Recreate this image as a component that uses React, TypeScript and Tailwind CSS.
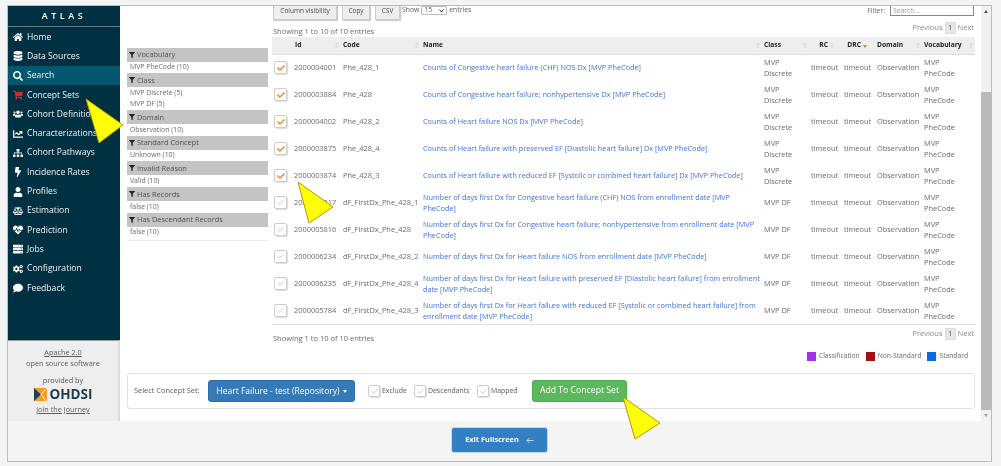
import {
  FaBalanceScale,
  FaBolt,
  FaChartLine,
  FaCheck,
  FaCogs,
  FaComment,
  FaDatabase,
  FaFilter,
  FaHeartbeat,
  FaHome,
  FaSearch,
  FaServer,
  FaShoppingCart,
  FaSitemap,
  FaUser,
  FaUsers,
} from "react-icons/fa";

const navItems = [
  { icon: FaHome, label: "Home" },
  { icon: FaDatabase, label: "Data Sources" },
  { icon: FaSearch, label: "Search", active: true },
  { icon: FaShoppingCart, label: "Concept Sets", red: true },
  { icon: FaUsers, label: "Cohort Definitions" },
  { icon: FaChartLine, label: "Characterizations" },
  { icon: FaSitemap, label: "Cohort Pathways" },
  { icon: FaBolt, label: "Incidence Rates" },
  { icon: FaUser, label: "Profiles" },
  { icon: FaBalanceScale, label: "Estimation" },
  { icon: FaHeartbeat, label: "Prediction" },
  { icon: FaServer, label: "Jobs" },
  { icon: FaCogs, label: "Configuration" },
  { icon: FaComment, label: "Feedback" },
];

const facets = [
  { title: "Vocabulary", values: ["MVP PheCode (10)"] },
  { title: "Class", values: ["MVP Discrete (5)", "MVP DF (5)"] },
  { title: "Domain", values: ["Observation (10)"] },
  { title: "Standard Concept", values: ["Unknown (10)"] },
  { title: "Invalid Reason", values: ["Valid (10)"] },
  { title: "Has Records", values: ["false (10)"] },
  { title: "Has Descendant Records", values: ["false (10)"] },
];

const rows = [
  { id: "2000004001", code: "Phe_428_1", name: "Counts of Congestive heart failure (CHF) NOS Dx [MVP PheCode]", cls: "MVP Discrete", on: true },
  { id: "2000003884", code: "Phe_428", name: "Counts of Congestive heart failure; nonhypertensive Dx [MVP PheCode]", cls: "MVP Discrete", on: true },
  { id: "2000004002", code: "Phe_428_2", name: "Counts of Heart failure NOS Dx [MVP PheCode]", cls: "MVP Discrete", on: true },
  { id: "2000003875", code: "Phe_428_4", name: "Counts of Heart failure with preserved EF [Diastolic heart failure] Dx [MVP PheCode]", cls: "MVP Discrete", on: true },
  { id: "2000003874", code: "Phe_428_3", name: "Counts of Heart failure with reduced EF [Systolic or combined heart failure] Dx [MVP PheCode]", cls: "MVP Discrete", on: true },
  { id: "2000005817", code: "dF_FirstDx_Phe_428_1", name: "Number of days first Dx for Congestive heart failure (CHF) NOS from enrollment date [MVP PheCode]", cls: "MVP DF", on: false },
  { id: "2000005816", code: "dF_FirstDx_Phe_428", name: "Number of days first Dx for Congestive heart failure; nonhypertensive from enrollment date [MVP PheCode]", cls: "MVP DF", on: false },
  { id: "2000006234", code: "dF_FirstDx_Phe_428_2", name: "Number of days first Dx for Heart failure NOS from enrollment date [MVP PheCode]", cls: "MVP DF", on: false },
  { id: "2000006235", code: "dF_FirstDx_Phe_428_4", name: "Number of days first Dx for Heart failure with preserved EF [Diastolic heart failure] from enrollment date [MVP PheCode]", cls: "MVP DF", on: false },
  { id: "2000005784", code: "dF_FirstDx_Phe_428_3", name: "Number of days first Dx for Heart failure with reduced EF [Systolic or combined heart failure] from enrollment date [MVP PheCode]", cls: "MVP DF", on: false },
];

const headers = [
  { label: "", w: "w-[21px]" },
  { label: "Id", w: "w-[48px]" },
  { label: "Code", w: "w-[80px]" },
  { label: "Name", w: "w-[341px]" },
  { label: "Class", w: "w-[47px]" },
  { label: "RC", w: "w-[33px]", right: true },
  { label: "DRC", w: "w-[33px]", right: true, sorted: true },
  { label: "Domain", w: "w-[47px]" },
  { label: "Vocabulary", w: "w-[53px]" },
];

function SortArrows({ tight }: { tight?: boolean }) {
  return (
    <span className={`flex flex-col gap-[1px] ${tight ? "ml-[2px]" : "ml-auto"}`}>
      <span className="w-0 h-0 border-x-[2.5px] border-x-transparent border-b-[3px] border-b-[#ddd]" />
      <span className="w-0 h-0 border-x-[2.5px] border-x-transparent border-t-[3px] border-t-[#ddd]" />
    </span>
  );
}

function CheckBox({ on, small }: { on?: boolean; small?: boolean }) {
  return (
    <span
      className={`inline-flex items-center justify-center border border-[#ccc] rounded-[2px] bg-white shadow-[1px_1px_1px_#ddd] ${
        small ? "w-[12px] h-[12px]" : "w-[13px] h-[13px]"
      }`}
    >
      <FaCheck className={on ? "w-[8px] h-[8px] text-[#f08a24]" : "w-[7px] h-[7px] text-[#e2e2e2]"} />
    </span>
  );
}

function Pager() {
  return (
    <div className="flex items-center justify-end gap-[2px] text-[7.5px] text-[#888]">
      <span>Previous</span>
      <span className="w-[11px] h-[12px] bg-[#e6e6e6] border border-[#ddd] text-[#555] flex items-center justify-center">1</span>
      <span>Next</span>
    </div>
  );
}

function Arrow({ points }: { points: string }) {
  return <polygon points={points} fill="#ffff00" stroke="#b8960c" strokeWidth="1" strokeLinejoin="round" />;
}

export default function App() {
  return (
    <div className="relative w-[1001px] h-[466px] overflow-hidden bg-[#f4f4f4] pt-[5px] pl-[7px] blur-[0.3px] font-['Open_Sans',sans-serif]">
      <div className="w-[985px] h-[457px] border border-[#bbb] flex flex-col">
        <div className="h-[415px] flex bg-white overflow-hidden">
          {/* sidebar */}
          <div className="w-[112px] shrink-0 flex flex-col bg-[#003142]">
            <div className="h-[21px] border-b border-[#6a7a88] flex items-center justify-center text-[9px] font-semibold text-white tracking-[3.5px]">
              ATLAS
            </div>
            <div className="flex-1 pt-[0.5px]">
              {navItems.map((item) => (
                <div
                  key={item.label}
                  className={`h-[19.3px] flex items-center pl-[4px] text-[8.6px] whitespace-nowrap text-[#f0f3f5] overflow-hidden ${
                    item.active ? "bg-[#05566f]" : ""
                  }`}
                >
                  <span className="w-[12px] flex justify-center mr-[3px]">
                    <item.icon className={`w-[10px] h-[10px] ${item.red ? "text-[#c9302c]" : "text-white"}`} />
                  </span>
                  {item.label}
                </div>
              ))}
            </div>
            <div className="h-[81px] bg-[#eeeeee] border-t border-[#999] border-r-2 border-r-[#ddd] flex flex-col items-center pt-[5px] text-[7.3px] text-[#5a5a5a]">
              <span className="underline leading-[12px]">Apache 2.0</span>
              <span className="leading-[11px]">open source software</span>
              <span className="leading-[11px] mt-[6px]">provided by</span>
              <div className="flex items-center gap-[3px] mt-[1px] h-[15px]">
                <svg width="13" height="13" viewBox="0 0 13 13">
                  <rect width="13" height="13" fill="#f59a23" />
                  <path d="M0 0 L7 6.5 L0 13Z" fill="#1f3f55" />
                  <path d="M7 6.5 L13 0 M7 6.5 L12 13" fill="none" stroke="#ffffff" strokeWidth="0.8" />
                </svg>
                <span className="text-[13.5px] font-bold text-[#1b3a4f] leading-none">OHDSI</span>
              </div>
              <span className="underline leading-[12px] mt-[1px]">join the journey</span>
            </div>
          </div>

          {/* main */}
          <div className="w-[855px] shrink-0 flex flex-col">
            <div className="h-[367px] flex overflow-hidden">
              <div className="w-[141px] shrink-0 ml-[7px] pt-[41.5px]">
                {facets.map((f) => (
                  <div key={f.title}>
                    <div className="h-[14px] bg-[#c4c4c4] flex items-center gap-[2px] pl-[2px] text-[7.4px] text-[#505050]">
                      <FaFilter className="w-[6px] h-[6px] text-[#222]" />
                      {f.title}
                    </div>
                    {f.values.map((v) => (
                      <div key={v} className="h-[11.6px] pl-[3px] flex items-center text-[6.9px] text-[#6a6a6a]">
                        {v}
                      </div>
                    ))}
                  </div>
                ))}
                <div className="border-t border-[#eee] mt-[2px]" />
              </div>

              <div className="w-[703px] ml-[4px] shrink-0">
                <div className="h-[16px] flex items-start pl-[1px]">
                  <div className="flex gap-[5px] -mt-[5px]">
                    {["Column visibility", "Copy", "CSV"].map((b) => (
                      <span
                        key={b}
                        className={`h-[19px] bg-[#eeeeee] border border-[#ccc] shadow-[1px_1px_1px_#ccc] flex items-center justify-center text-[6.5px] text-[#4a4a4a] whitespace-nowrap ${
                          b === "Column visibility" ? "w-[64px]" : b === "Copy" ? "w-[28px]" : "w-[25px]"
                        }`}
                      >
                        {b}
                      </span>
                    ))}
                  </div>
                  <div className="flex items-center gap-[2px] ml-[2px] text-[6.8px] leading-none text-[#5a5a5a]">
                    Show
                    <span className="w-[26px] h-[9px] border border-[#bbb] rounded-[1px] pl-[2px] flex items-center">
                      15
                      <svg className="ml-auto mr-[2px]" width="5" height="4" viewBox="0 0 5 4">
                        <path d="M0.5 0.5 L2.5 3 L4.5 0.5" fill="none" stroke="#333" strokeWidth="1" />
                      </svg>
                    </span>
                    entries
                  </div>
                  <div className="ml-auto flex items-center gap-[5px] text-[6.8px] text-[#6a6a6a] pr-[1px]">
                    Filter:
                    <span className="w-[84px] h-[10px] border border-[#888] border-t-0 pl-[2px] flex items-center text-[6.8px] text-[#999]">
                      Search...
                    </span>
                  </div>
                </div>
                <div className="h-[15px] flex justify-between items-start text-[7.5px] text-[#6a6a6a] pl-[1px] pr-[1px]">
                  <span className="mt-[3px] leading-[12px]">Showing 1 to 10 of 10 entries</span>
                  <Pager />
                </div>
                <table className="w-[703px] table-fixed border-collapse">
                  <thead>
                    <tr className="h-[17px] bg-[#eeeeee] border-b border-[#ddd]">
                      {headers.map((h, i) => (
                        <th key={i} className={`${h.w} px-[2px] text-[6.7px] font-bold text-[#222]`}>
                          <div className={`flex items-center ${h.right ? "justify-end pr-[6px]" : ""}`}>
                            {h.label}
                            {h.sorted ? (
                              <span className="w-0 h-0 ml-[2px] mt-[2px] border-x-[2.5px] border-x-transparent border-t-[3px] border-t-[#f0762a]" />
                            ) : h.label ? (
                              <SortArrows tight={h.right} />
                            ) : null}
                          </div>
                        </th>
                      ))}
                    </tr>
                  </thead>
                  <tbody>
                    {rows.map((r) => (
                      <tr key={r.id} className="h-[27px] text-[7.4px] text-[#6a6a6a] leading-[11px]">
                        <td className="pl-[2px]">
                          <span className="flex items-center"><CheckBox on={r.on} /></span>
                        </td>
                        <td className="pl-[1px] whitespace-nowrap">{r.id}</td>
                        <td className="pl-[2px] whitespace-nowrap">{r.code}</td>
                        <td className="pl-[2px] text-[7.3px] text-[#3f72d8]">{r.name}</td>
                        <td className="pl-[2px]">{r.cls}</td>
                        <td className="pl-[2px]">timeout</td>
                        <td className="pl-[2px]">timeout</td>
                        <td className="pl-[2px]">Observation</td>
                        <td className="pl-[2px] pr-[10px]">MVP PheCode</td>
                      </tr>
                    ))}
                  </tbody>
                </table>
                <div className="border-t border-[#ddd] flex justify-between items-start text-[7.5px] text-[#6a6a6a] pl-[1px] pr-[1px] pt-[3px]">
                  <span className="mt-[4px] leading-[12px]">Showing 1 to 10 of 10 entries</span>
                  <Pager />
                </div>
                <div className="flex justify-end items-center gap-[3px] mt-[7px] pr-[7px] text-[6.7px] text-[#6a6a6a]">
                  <span className="w-[9px] h-[9px] bg-[#a02ff0]" />
                  <span className="mr-[3px]">Classification</span>
                  <span className="w-[9px] h-[9px] bg-[#a01010]" />
                  <span className="mr-[3px]">Non-Standard</span>
                  <span className="w-[9px] h-[9px] bg-[#0a6ae0]" />
                  <span>Standard</span>
                </div>
              </div>
            </div>

            {/* add to concept set */}
            <div className="ml-[7px] w-[848px] h-[36px] border border-[#e2e2e2] rounded-[3px] flex items-center pl-[6px]">
              <span className="w-[74px] text-[7.4px] text-[#5a5a5a] whitespace-nowrap">Select Concept Set:</span>
              <span className="w-[147px] h-[22px] bg-[#337ab7] border border-[#2e6da4] rounded-[3px] flex items-center justify-center gap-[3px] text-[8.5px] text-white mr-[13px] whitespace-nowrap">
                Heart Failure - test (Repository)
                <span className="w-0 h-0 border-x-[2.5px] border-x-transparent border-t-[3px] border-t-white" />
              </span>
              <span className="w-[46px] flex items-center gap-[2px] text-[6.9px] text-[#5a5a5a]"><CheckBox small />Exclude</span>
              <span className="w-[63px] flex items-center gap-[2px] text-[6.9px] text-[#5a5a5a]"><CheckBox small />Descendants</span>
              <span className="w-[55px] flex items-center gap-[2px] text-[6.9px] text-[#5a5a5a]"><CheckBox small />Mapped</span>
              <span className="w-[95px] h-[22px] bg-[#5cb85c] border border-[#4cae4c] rounded-[3px] flex items-center justify-center text-[8.7px] text-white whitespace-nowrap">
                Add To Concept Set
              </span>
            </div>
          </div>

          {/* scrollbar */}
          <div className="w-[10px] shrink-0 ml-[6px] bg-[#f1f1f1] flex flex-col items-center">
            <div className="h-[10px] flex items-center">
              <span className="w-0 h-0 border-x-[2px] border-x-transparent border-b-[3px] border-b-[#505050]" />
            </div>
            <div className="w-full mt-[76px] h-[318px] bg-[#b9b9b9]" />
            <div className="h-[10px] flex items-center">
              <span className="w-0 h-0 border-x-[2px] border-x-transparent border-t-[3px] border-t-[#a0a0a0]" />
            </div>
          </div>
        </div>

        <div className="flex-1 flex items-center justify-center pb-[2px]">
          <span className="w-[97px] h-[26px] bg-[#337fc4] border border-[#c8d8e8] rounded-[3px] flex items-center justify-center gap-[7px] text-[7.4px] font-bold text-white">
            Exit Fullscreen
            <svg width="8" height="7" viewBox="0 0 8 7">
              <path d="M7.5 3.5 H1 M3.5 1 L1 3.5 L3.5 6" fill="none" stroke="white" strokeWidth="0.7" />
            </svg>
          </span>
        </div>
      </div>

      {/* annotation arrows */}
      <svg className="absolute inset-0 pointer-events-none" width="1001" height="466">
        <Arrow points="86,99 123,125 99,143" />
        <Arrow points="298,182 333,207 309,223" />
        <Arrow points="623,397 660,423 635,439" />
      </svg>
    </div>
  );
}
